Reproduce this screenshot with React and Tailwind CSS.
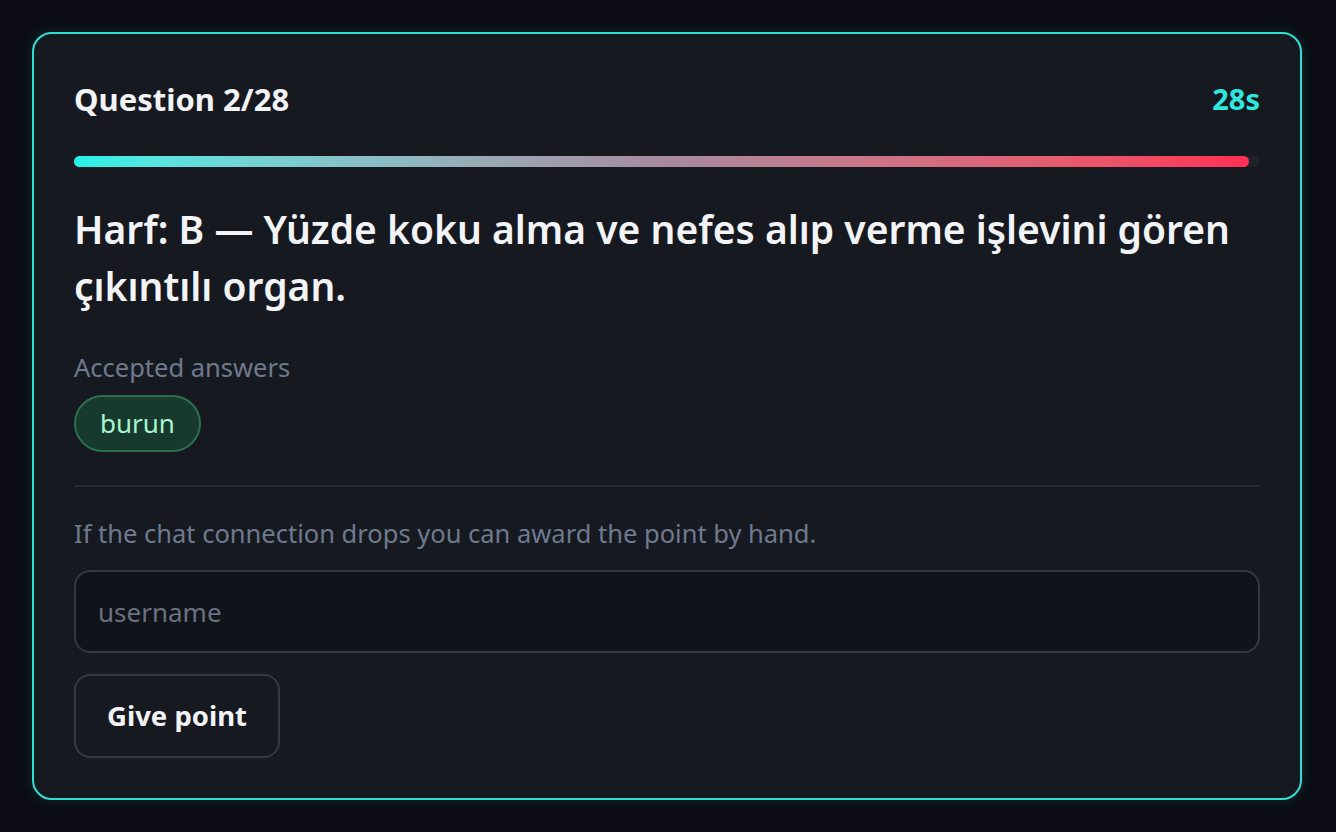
export default function App() {
  return (
    <div
      className="min-h-screen w-full bg-[#0b0c14] py-8 pl-8 pr-[34px]"
      style={{ fontFamily: '"Noto Sans", "Open Sans", sans-serif' }}
    >
      <div className="rounded-[20px] border-2 border-[#2ee0d2] bg-[#161920] px-10 pt-[40px] pb-10 shadow-[0_0_14px_rgba(46,224,210,0.15)]">
        <div className="flex items-center justify-between h-[50px]">
          <h2 className="text-[31px] font-bold text-[#f3f4f8]">Question 2/28</h2>
          <span className="text-[29px] font-bold text-[#2ee8df]">28s</span>
        </div>

        <div className="mt-[32px] h-[11px] w-full rounded-full bg-[#1f222b]">
          <div
            className="h-full rounded-full bg-gradient-to-r from-[#22f2ea] via-[#a68aa0] to-[#ff2d55]"
            style={{ width: "99.1%" }}
          />
        </div>

        <h1 className="mt-[33px] text-[39px] font-semibold leading-[57px] text-[#f3f4f8]">
          Harf: B — Yüzde koku alma ve nefes alıp verme işlevini gören çıkıntılı organ.
        </h1>

        <p className="mt-[35px] text-[25.5px] leading-[36px] text-[#6f7a8f]">Accepted answers</p>
        <div className="mt-[10px] flex">
          <span className="inline-flex h-[57px] items-center rounded-full border-2 border-[#2d6e4f] bg-[#183a2e] px-6 text-[26px] text-[#a9f5cc]">
            burun
          </span>
        </div>

        <div className="mt-[33px] h-[2px] w-full bg-[#262a35]" />

        <p className="mt-[28px] text-[25.5px] leading-[36px] text-[#6f7a8f]">
          If the chat connection drops you can award the point by hand.
        </p>

        <input
          type="text"
          placeholder="username"
          className="mt-[19px] block h-[83px] w-full rounded-[16px] border-2 border-[#323846] bg-[#10131a] px-[22px] text-[26px] text-white placeholder:text-[#6b7280] outline-none"
        />

        <button
          type="button"
          className="mt-[21px] h-[84px] rounded-[16px] border-2 border-[#323846] bg-[#161920] px-[31px] text-[27.5px] font-bold text-[#f3f4f8]"
        >
          Give point
        </button>
      </div>
    </div>
  );
}
